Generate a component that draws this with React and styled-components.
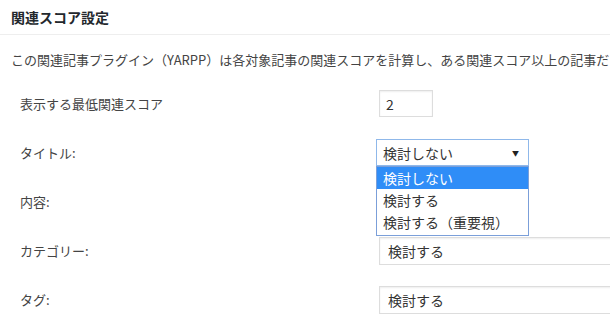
import React from "react";
import styled, { createGlobalStyle } from "styled-components";

const GlobalStyle = createGlobalStyle`
  html, body {
    margin: 0;
    padding: 0;
    background: #fff;
    overflow: hidden;
  }
  body {
    font-family: "Noto Sans CJK JP", "Noto Sans", sans-serif;
    color: #444;
  }
`;

const Panel = styled.div`
  width: 610px;
  height: 329px;
  overflow: hidden;
  background: #fff;
`;

const Header = styled.h2`
  margin: 0;
  height: 34px;
  padding: 0 11px;
  display: flex;
  align-items: center;
  font-size: 14px;
  font-weight: 700;
  color: #23282d;
  border-bottom: 1px solid #eeeeee;
`;

const Intro = styled.p`
  margin: 15px 0 9px;
  padding: 0 11px;
  font-size: 13px;
  line-height: 20px;
  color: #444;
  white-space: nowrap;
`;

const Rows = styled.div`
  display: grid;
  grid-template-columns: 359px 1fr;
  grid-auto-rows: 49px;
  padding-left: 20px;
`;

const Label = styled.div`
  display: flex;
  align-items: center;
  font-size: 13px;
  color: #444;
`;

const Field = styled.div`
  display: flex;
  align-items: center;
  position: relative;
  z-index: ${(p) => (p.$raised ? 2 : 0)};
`;

const NumberBox = styled.input`
  box-sizing: border-box;
  width: 54px;
  height: 27px;
  border: 1px solid #ddd;
  box-shadow: inset 0 1px 2px rgba(0, 0, 0, 0.07);
  padding: 0 6px;
  font-family: "Noto Sans CJK JP", sans-serif;
  font-size: 14px;
  color: #333;
  outline: none;
`;

const SelectWrap = styled.div`
  position: relative;
  margin-left: ${(p) => (p.$open ? "-3px" : "0")};
`;

const SelectBox = styled.div`
  box-sizing: border-box;
  width: ${(p) => (p.$open ? "153px" : "300px")};
  height: ${(p) => (p.$open ? "27px" : "28px")};
  display: flex;
  align-items: center;
  justify-content: space-between;
  padding: ${(p) => (p.$open ? "0 9px 0 6px" : "0 8px")};
  border: 1px solid ${(p) => (p.$open ? "#8fb8ea" : "#dddddd")};
  box-shadow: ${(p) => (p.$open ? "none" : "inset 0 1px 2px rgba(0,0,0,0.07)")};
  font-size: 14px;
  color: #333;
  background: #fff;
`;

const Arrow = styled.span`
  font-size: 7px;
  color: #222;
`;

const Menu = styled.ul`
  position: absolute;
  top: 100%;
  left: 0;
  width: 153px;
  box-sizing: border-box;
  margin: 0;
  padding: 0 0 2px;
  list-style: none;
  background: #fff;
  border: 1px solid #7b9fd9;
  z-index: 5;
`;

const Option = styled.li`
  height: 22px;
  display: flex;
  align-items: center;
  padding: 0 6px;
  font-size: 14px;
  color: ${(p) => (p.$active ? "#fff" : "#333")};
  background: ${(p) => (p.$active ? "#2f8df7" : "transparent")};
`;

const choices = ["検討しない", "検討する", "検討する（重要視）"];

const Select = ({ value, open }) => (
  <SelectWrap $open={open}>
    <SelectBox $open={open}>
      <span>{value}</span>
      {open && <Arrow>▼</Arrow>}
    </SelectBox>
    {open && (
      <Menu>
        {choices.map((c) => (
          <Option key={c} $active={c === value}>
            {c}
          </Option>
        ))}
      </Menu>
    )}
  </SelectWrap>
);

export default function App() {
  return (
    <>
      <GlobalStyle />
      <Panel>
        <Header>関連スコア設定</Header>
        <Intro>
          この関連記事プラグイン（YARPP）は各対象記事の関連スコアを計算し、ある関連スコア以上の記事だけを関連記事として表示します。
        </Intro>
        <Rows>
          <Label>表示する最低関連スコア</Label>
          <Field>
            <NumberBox defaultValue="2" />
          </Field>

          <Label>タイトル:</Label>
          <Field $raised>
            <Select value="検討しない" open />
          </Field>

          <Label>内容:</Label>
          <Field>
            {/* hidden under the open menu above */}
          </Field>

          <Label>カテゴリー:</Label>
          <Field>
            <Select value="検討する" />
          </Field>

          <Label>タグ:</Label>
          <Field>
            <Select value="検討する" />
          </Field>
        </Rows>
      </Panel>
    </>
  );
}
